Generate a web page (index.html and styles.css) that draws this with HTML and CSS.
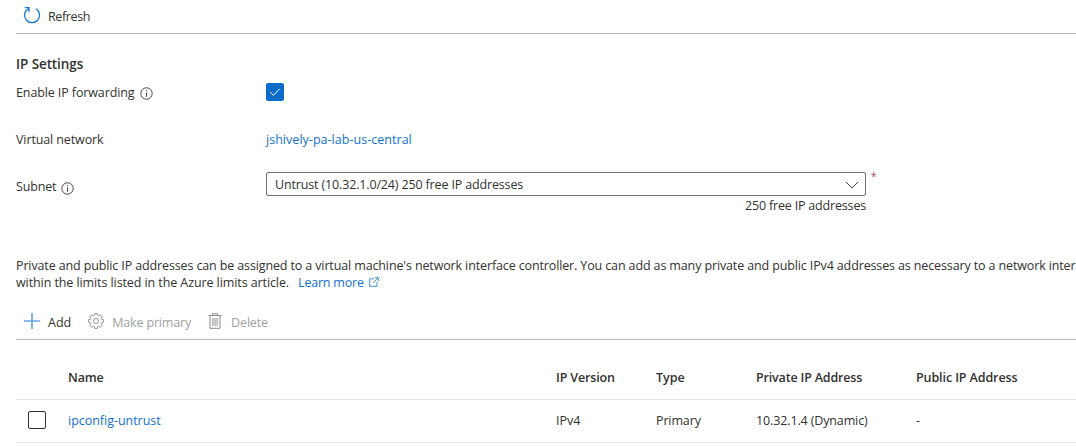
FILE: index.html
```html
<!DOCTYPE html>
<html lang="en">
<head>
<meta charset="utf-8">
<title>IP configurations</title>
<link rel="stylesheet" href="styles.css">
</head>
<body>
<main class="page">
  <div class="toolbar toolbar-top">
    <button class="command">
      <svg class="icon" width="18" height="18" viewBox="0 0 18 18"><path d="M5.3 2.7A7.5 7.5 0 1 0 12.8 2.7M1.8 1.7H6V6" stroke="#1479d4" stroke-width="1.3"/></svg>
      <span class="t-refresh">Refresh</span>
    </button>
  </div>

  <section class="settings">
    <h2 class="heading">IP Settings</h2>
    <div class="field field-forwarding">
      <div class="label"><span class="t-forwarding">Enable IP forwarding</span>
        <svg class="info" width="13" height="13" viewBox="0 0 13 13"><circle cx="6.5" cy="6.5" r="5.7" stroke="#444"/><path d="M6.5 5.5V9.7M6.5 3.2V4.3" stroke="#444"/></svg>
      </div>
      <span class="checkbox checked"><svg width="18" height="18" viewBox="0 0 18 18"><path d="M4.2 9.2L7.4 12.3L13.8 5.7" stroke="#fff"/></svg></span>
    </div>
    <div class="field field-network">
      <div class="label"><span class="t-network">Virtual network</span></div>
      <a class="link t-vnet">jshively-pa-lab-us-central</a>
    </div>
    <div class="field field-subnet">
      <div class="label"><span class="t-subnet">Subnet</span>
        <svg class="info" width="13" height="13" viewBox="0 0 13 13"><circle cx="6.5" cy="6.5" r="5.7" stroke="#444"/><path d="M6.5 5.5V9.7M6.5 3.2V4.3" stroke="#444"/></svg>
      </div>
      <div class="select"><span class="t-select">Untrust (10.32.1.0/24) 250 free IP addresses</span>
        <svg width="14" height="8" viewBox="0 0 14 8"><path d="M1 1L7 7L13 1" stroke="#444"/></svg>
      </div>
      <span class="required">*</span>
    </div>
    <div class="hint"><span class="t-hint">250 free IP addresses</span></div>
  </section>

  <div class="description">
    <div class="t-line1">Private and public IP addresses can be assigned to a virtual machine's network interface controller. You can add as many private and public IPv4 addresses as necessary to a network inter</div>
    <div class="line2"><span class="t-line2">within the limits listed in the Azure limits article.</span><a class="link learn"><span class="t-learn">Learn more</span>
      <svg width="10" height="10" viewBox="0 0 11 11"><path d="M5.5 2H.8V10.2H8.8V5.5M4.5 6.5L10 1M6.5.7H10.3V4.5" stroke="#1479d4" stroke-width=".9"/></svg></a></div>
  </div>

  <div class="toolbar toolbar-table">
    <button class="command"><svg class="icon add-icon" width="16" height="16" viewBox="0 0 16 16"><path d="M0 8H16M8 0V16" stroke="#65a8e5" stroke-width="1.7"/></svg><span class="t-add">Add</span></button>
    <button class="command disabled"><svg class="icon" width="16" height="16" viewBox="0 0 16 16"><path d="M6.7.6H9.3L9.7 2.5L10.7 2.9L12.4 1.8L14.2 3.6L13.1 5.3L13.5 6.3L15.4 6.7V9.3L13.5 9.7L13.1 10.7L14.2 12.4L12.4 14.2L10.7 13.1L9.7 13.5L9.3 15.4H6.7L6.3 13.5L5.3 13.1L3.6 14.2L1.8 12.4L2.9 10.7L2.5 9.7L.6 9.3V6.7L2.5 6.3L2.9 5.3L1.8 3.6L3.6 1.8L5.3 2.9L6.3 2.5Z" stroke="#999"/><circle cx="8" cy="8" r="2.5" stroke="#999"/></svg><span class="t-primary">Make primary</span></button>
    <button class="command disabled"><svg class="icon trash" width="14" height="16" viewBox="0 0 14 16"><path d="M.5 2.5H13.5M4.5 2.5V.7H9.5V2.5M2 2.5V15.3H12V2.5M4.9 5V13M7 5V13M9.1 5V13" stroke="#8c8c8c"/></svg><span class="t-delete">Delete</span></button>
  </div>

  <div class="table">
    <div class="row header">
      <span></span><span class="t-name">Name</span><span class="t-version">IP Version</span><span class="t-type">Type</span><span class="t-private">Private IP Address</span><span class="t-public">Public IP Address</span>
    </div>
    <div class="row">
      <span class="checkbox"></span><a class="link t-ipconfig">ipconfig-untrust</a><span class="t-ipv4">IPv4</span><span class="t-kind">Primary</span><span class="t-address">10.32.1.4 (Dynamic)</span><span>-</span>
    </div>
  </div>
</main>
</body>
</html>
```
FILE: styles.css
```css
* { box-sizing: border-box; }
body {
  margin: 0;
  overflow: hidden;
  background: #fff;
  color: #323130;
  font: 12.5px/18px "Open Sans", "Noto Sans", sans-serif;
}
.page { padding-left: 16px; white-space: nowrap; }
svg { display: block; flex: none; fill: none; }
.link { color: #1272cf; }
.toolbar { display: flex; border-bottom: 1px solid #bebbb8; padding-left: 8px; }
.toolbar-top { height: 34px; padding-top: 8px; padding-left: 7px; }
.command {
  display: flex;
  align-items: flex-start;
  border: 0;
  padding: 0;
  background: none;
  color: inherit;
  font: inherit;
}
.toolbar-top .command { gap: 7px; }
.toolbar-top .icon { margin-top: -2px; }
.disabled { color: #a19f9d; }
.heading { margin: 21px 0 0; font-size: 13.5px; line-height: 18px; font-weight: 600; letter-spacing: -.1px; }
.field { display: flex; align-items: flex-start; }
.label { display: flex; align-items: center; gap: 5px; width: 250px; height: 18px; }
.field-forwarding { margin-top: 10px; height: 48px; }
.field-forwarding .label { height: 20px; }
.field-network { height: 41px; }
.field-subnet { height: 24px; }
.field-subnet .label { margin-top: 6px; }
.field-subnet .info { margin-top: 2px; }
.checkbox { width: 18px; height: 18px; border: 1px solid #323130; border-radius: 2px; }
.checked { border: 0; background: #0b6bcb; }
.select {
  display: flex;
  align-items: center;
  justify-content: space-between;
  width: 600px;
  height: 24px;
  padding: 1px 6px 0 8px;
  border: 1px solid #757371;
  border-radius: 2px;
}
.required { margin: -5px 0 0 5px; color: #b8404a; font-size: 10px; }
.hint { width: 850px; margin-top: 1px; text-align: right; }
.description { margin-top: 42px; line-height: 17px; }
.line2, .learn { display: flex; }
.learn { margin-left: 9px; gap: 5px; }
.learn svg { margin-top: 3px; }
.toolbar-table { height: 49px; padding-top: 23px; gap: 17px; }
.toolbar-table .command { gap: 8px; }
.toolbar-table .icon { margin-top: -1px; }
.toolbar-table .trash { margin-right: 1px; }
.table { padding-top: 17px; }
.row {
  display: grid;
  grid-template-columns: 52px 488px 100px 100px 160px 1fr;
  align-items: center;
  height: 43px;
  border-bottom: 1px solid #e5e3e1;
}
.row .checkbox { margin: -2px 0 0 12px; }
.header { font-weight: 600; }

/* Tracking per label */
.t-refresh { letter-spacing: -.36px; }
.t-forwarding, .t-network { letter-spacing: -.11px; }
.t-vnet { letter-spacing: .03px; }
.t-subnet { letter-spacing: -.17px; }
.t-select { letter-spacing: -.15px; }
.t-hint { letter-spacing: -.18px; }
.t-line1 { letter-spacing: -.128px; }
.t-line2 { letter-spacing: -.09px; }
.t-learn { letter-spacing: -.2px; }
.t-primary, .t-delete { letter-spacing: -.16px; }
.t-name, .t-version { letter-spacing: -.15px; }
.t-private { letter-spacing: -.17px; }
.t-public { letter-spacing: -.1px; }
.t-ipconfig { letter-spacing: -.03px; }
.t-kind, .t-address { letter-spacing: -.13px; }
```
